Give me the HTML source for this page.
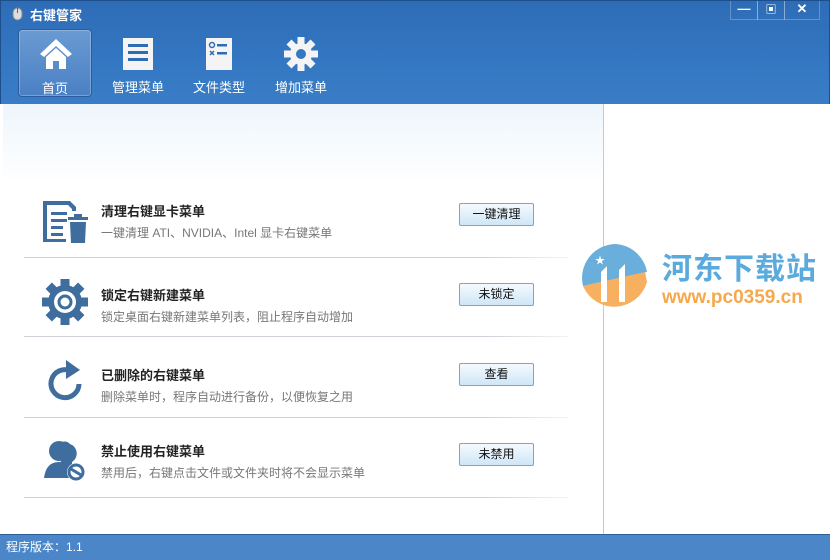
<!DOCTYPE html>
<html><head><meta charset="utf-8"><style>
*{margin:0;padding:0;box-sizing:border-box}
body{width:830px;height:560px;overflow:hidden;font-family:"Liberation Sans","Noto Sans CJK SC",sans-serif;background:#fff;position:relative}
.hdr{position:absolute;left:0;top:0;width:830px;height:104px;background:linear-gradient(180deg,#2e6cb6 0%,#3477c2 60%,#3a7dc6 100%);border:1px solid #1d4f8c;border-bottom:none}
.title{position:absolute;left:29px;top:4px;color:#fff;font-size:13px;font-weight:bold}
.nav{position:absolute;top:28px;width:74px;height:68px;text-align:center;color:#fff;font-size:13px}
.nav.sel{background:linear-gradient(180deg,#6a9ad2,#4a80c4);border:1px solid #2a5c9c;border-radius:4px;box-shadow:inset 0 0 0 1px rgba(255,255,255,.25)}
.nav span{position:absolute;left:0;right:0;top:48px}
.nav svg{position:absolute;left:19px;top:6px}
.wb{position:absolute;top:0;height:19px;width:28px;border:1px solid rgba(255,255,255,.25);border-top:none;color:#fff;text-align:center;font-size:13px;font-weight:bold}
.main{position:absolute;left:3px;top:104px;width:600px;height:430px;background:linear-gradient(180deg,#eef6fc 0,#fff 80px)}
.rp{position:absolute;left:603px;top:104px;width:224px;height:430px;border-left:1px solid #c8c8d0;background:#fff}
.rt{position:absolute;left:101px;font-size:13px;font-weight:bold;color:#222}
.rd{position:absolute;left:101px;font-size:12px;color:#777}
.sep{position:absolute;left:24px;width:544px;height:1px;background:linear-gradient(90deg,#d0d0d8 85%,#f4f4f6)}
.btn{position:absolute;left:459px;width:75px;height:23px;border:1px solid #7fa4c4;border-radius:2px;background:linear-gradient(180deg,#f4fafe,#cfe6f7);font-size:12px;text-align:center;line-height:21px;color:#111}
.ic{position:absolute;left:40px}
.sb{position:absolute;left:0;top:534px;width:830px;height:26px;background:#4a86c8;border-top:1px solid #2d5f9a;color:#fff;font-size:12px;line-height:24px;padding-left:6px}
</style></head><body>
<div class="hdr">
<svg style="position:absolute;left:11px;top:6px" width="11" height="14"><rect x="1" y="1" width="9" height="12" rx="4.5" fill="#ddd" stroke="#888"/><line x1="5.5" y1="1" x2="5.5" y2="6" stroke="#666"/></svg>
<div class="title">右键管家</div>
<div class="wb" style="left:729px">—</div><div class="wb" style="left:756px;font-size:11px">▣</div><div class="wb" style="left:783px;width:36px">✕</div>
<div class="nav sel" style="left:17px"><svg width="36" height="36" viewBox="0 0 36 36"><path d="M2 18 L18 3 L34 18 L30 21 L18 10 L6 21Z" fill="#fff"/><path d="M8 21 L18 12 L28 21 V33 H21 V25 H15 V33 H8Z" fill="#fff"/></svg><span>首页</span></div>
<div class="nav" style="left:100px"><svg width="36" height="36" viewBox="0 0 36 36"><rect x="3" y="3" width="30" height="32" fill="#f4f4f4"/><rect x="8" y="9" width="20" height="3" fill="#2e6cb6"/><rect x="8" y="16" width="20" height="3" fill="#2e6cb6"/><rect x="8" y="23" width="20" height="3" fill="#2e6cb6"/></svg><span>管理菜单</span></div>
<div class="nav" style="left:181px"><svg width="36" height="36" viewBox="0 0 36 36"><rect x="5" y="3" width="26" height="32" fill="#f4f4f4"/><circle cx="11" cy="10" r="2.5" fill="none" stroke="#2e6cb6" stroke-width="1.5"/><rect x="16" y="9" width="10" height="2.5" fill="#2e6cb6"/><path d="M9 16 L13 20 M13 16 L9 20" stroke="#2e6cb6" stroke-width="1.5"/><rect x="16" y="17" width="10" height="2.5" fill="#2e6cb6"/></svg><span>文件类型</span></div>
<div class="nav" style="left:263px"><svg width="36" height="36" viewBox="0 0 36 36"><g fill="#f4f4f4" transform="translate(18 19)"><circle r="11"/><g id="t"><rect x="-3.5" y="-17" width="7" height="8"/></g><use href="#t" transform="rotate(45)"/><use href="#t" transform="rotate(90)"/><use href="#t" transform="rotate(135)"/><use href="#t" transform="rotate(180)"/><use href="#t" transform="rotate(225)"/><use href="#t" transform="rotate(270)"/><use href="#t" transform="rotate(315)"/></g><circle cx="18" cy="19" r="5" fill="#3477c2"/></svg><span>增加菜单</span></div>
</div>
<div class="main"></div>
<div class="rp">
<svg style="position:absolute;left:-25px;top:138px" width="72" height="72" viewBox="0 0 72 72"><path d="M36 2 A34 34 0 0 0 4 44 L68 30 A34 34 0 0 0 36 2Z" fill="#6aaedc"/><path d="M4 44 A34 34 0 0 0 68 40 L66 30Z" fill="#f6b060"/><path d="M22 60 V30 L28 24 V60Z M40 60 V28 L46 22 V60Z" fill="#fff"/><text x="16" y="22" fill="#fff" font-size="10">★</text></svg>
<div style="position:absolute;left:58px;top:140px;font-size:30px;font-weight:bold;color:#5aaade;letter-spacing:1px">河东下载站</div>
<div style="position:absolute;left:58px;top:183px;font-size:19px;font-weight:bold;color:#f6a94c">www.pc0359.cn</div>
</div>

<svg class="ic" style="top:198px" width="50" height="46" viewBox="0 0 50 46"><path d="M3 3 H30 L36 9 V13 H32 V11 L28 7 H7 V41 H26 V44 H3Z" fill="#3f6d9e"/><rect x="11" y="14" width="16" height="3" fill="#3f6d9e"/><rect x="11" y="21" width="16" height="3" fill="#3f6d9e"/><rect x="11" y="28" width="12" height="3" fill="#3f6d9e"/><rect x="11" y="35" width="12" height="3" fill="#3f6d9e"/><rect x="28" y="19" width="20" height="3" fill="#3f6d9e"/><rect x="34" y="16" width="8" height="3" fill="#3f6d9e"/><path d="M30 24 H46 L45 45 H31Z" fill="#3f6d9e"/></svg>
<div class="rt" style="top:201px">清理右键显卡菜单</div><div class="rd" style="top:224px">一键清理 ATI、NVIDIA、Intel 显卡右键菜单</div>
<div class="btn" style="top:203px">一键清理</div><div class="sep" style="top:257px"></div>

<svg class="ic" style="top:278px" width="50" height="48" viewBox="0 0 50 48"><g fill="#3f6d9e" transform="translate(25 24)"><circle r="17"/><g id="g2"><rect x="-4.5" y="-23" width="9" height="9"/></g><use href="#g2" transform="rotate(45)"/><use href="#g2" transform="rotate(90)"/><use href="#g2" transform="rotate(135)"/><use href="#g2" transform="rotate(180)"/><use href="#g2" transform="rotate(225)"/><use href="#g2" transform="rotate(270)"/><use href="#g2" transform="rotate(315)"/><circle r="11" fill="#fff"/><circle r="7.5"/><circle r="4.5" fill="#fff"/></g></svg>
<div class="rt" style="top:285px">锁定右键新建菜单</div><div class="rd" style="top:308px">锁定桌面右键新建菜单列表，阻止程序自动增加</div>
<div class="btn" style="top:283px">未锁定</div><div class="sep" style="top:336px"></div>

<svg class="ic" style="top:358px" width="50" height="48" viewBox="0 0 50 48"><path d="M31 13 A14 14 0 1 0 39 26" fill="none" stroke="#3f6d9e" stroke-width="5"/><path d="M26 2 L40 12 L26 21Z" fill="#3f6d9e"/></svg>
<div class="rt" style="top:365px">已删除的右键菜单</div><div class="rd" style="top:388px">删除菜单时，程序自动进行备份，以便恢复之用</div>
<div class="btn" style="top:363px">查看</div><div class="sep" style="top:417px"></div>

<svg class="ic" style="top:438px" width="50" height="46" viewBox="0 0 50 46"><path d="M22 4 A8 9 0 0 1 30 6 A10 10 0 0 1 32 24 L32 38 H20 Z" fill="#3f6d9e"/><circle cx="19" cy="13" r="10" fill="#3f6d9e"/><path d="M4 40 Q6 24 19 24 Q28 24 30 32 L30 40Z" fill="#3f6d9e"/><circle cx="36" cy="34" r="9" fill="#fff"/><circle cx="36" cy="34" r="7" fill="none" stroke="#3f6d9e" stroke-width="3"/><path d="M31 31 L41 37" stroke="#3f6d9e" stroke-width="3"/></svg>
<div class="rt" style="top:441px">禁止使用右键菜单</div><div class="rd" style="top:464px">禁用后，右键点击文件或文件夹时将不会显示菜单</div>
<div class="btn" style="top:443px">未禁用</div><div class="sep" style="top:497px"></div>

<div class="sb">程序版本：1.1</div>
</body></html>
